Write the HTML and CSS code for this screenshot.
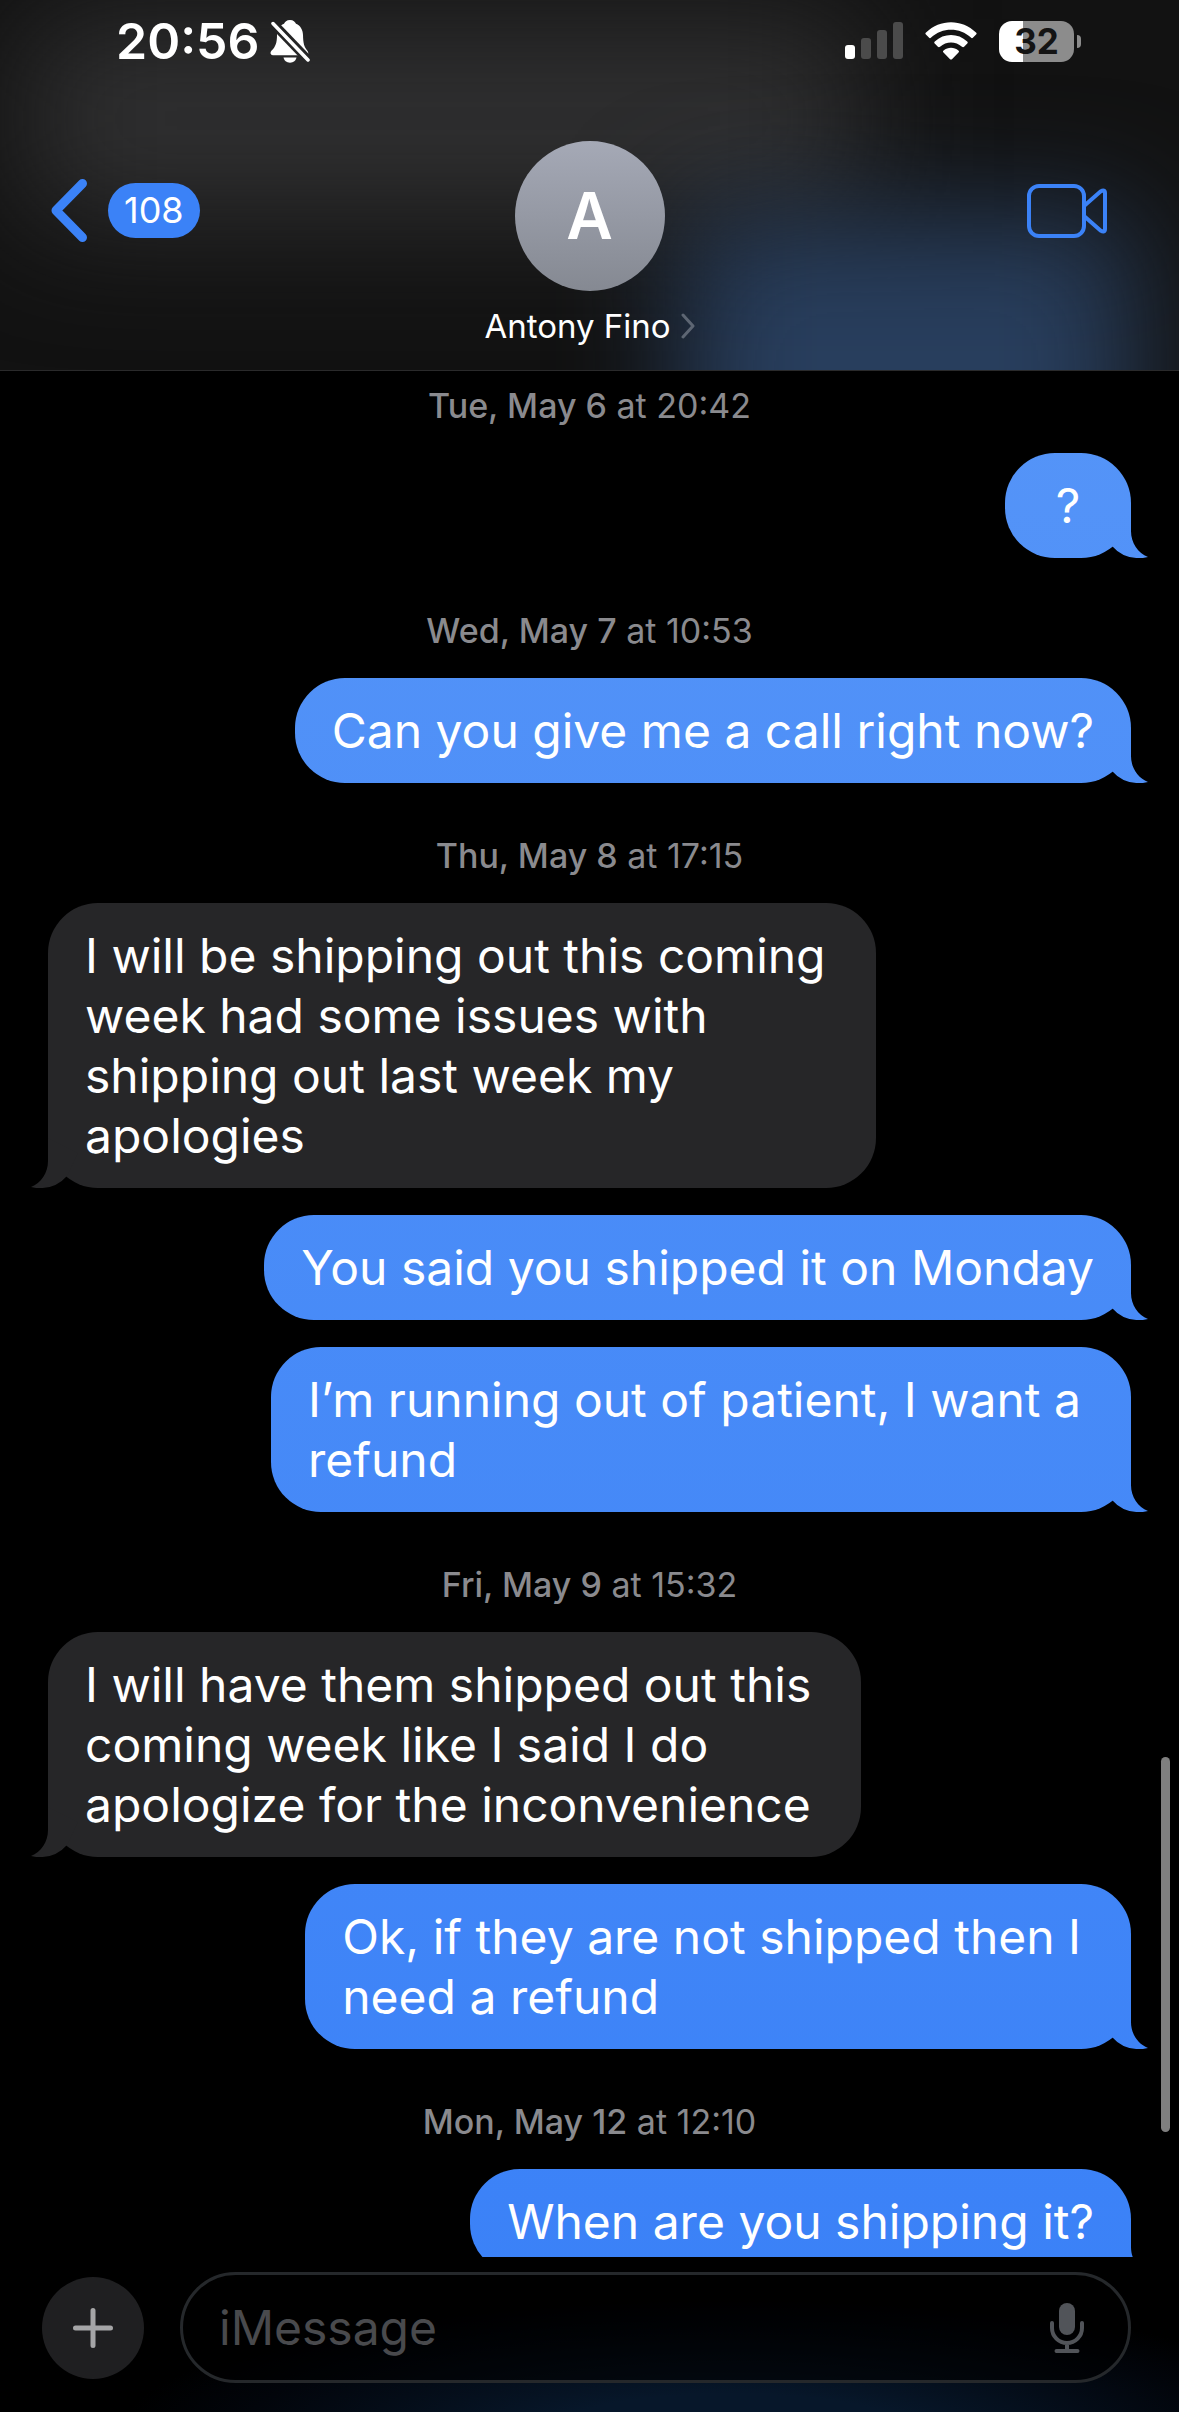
FILE: index.html
```html
<!DOCTYPE html>
<html lang="en">
<head>
  <meta charset="UTF-8" />
  <meta name="viewport" content="width=device-width, initial-scale=1.0"/>
  <title>Messages - Antony Fino</title>

  <link rel="stylesheet" href="styles.css">
</head>

<body>
  <header class="header">
    <div class="status-bar">
      <span class="time">20:56</span>
      <svg class="bell" width="40" height="44" viewBox="0 0 40 44" aria-hidden="true">
        <mask id="slashGap">
          <rect width="40" height="44" fill="#fff"/>
          <path d="M-3 -2L44 47" stroke="#000" stroke-width="9"/>
        </mask>
        <g fill="#fff" mask="url(#slashGap)">
          <path d="M20 1c3.400 0 5.200 1.900 6 3.800 4.600 2 6.800 6 7 11.200.2 8 .9 11.500 4.200 15.600 1.600 2 1.700 4.600-1.200 4.600H3c-2.700 0-3.300-2.600-1.400-4.600C5.500 27.800 7 24 7 16c.2-5.200 2.400-9.200 7-11.200C14.800 2.900 16.600 1 20 1z"/>
          <path d="M13.500 38.500h13c-.6 3-3 5.200-6.500 5.200s-5.900-2.200-6.500-5.200z"/>
        </g>
        <path d="M3 4.500L38 41" stroke="#fff" stroke-width="3.500" stroke-linecap="round"/>
      </svg>

      <div class="status-icons">
        <svg width="58" height="38" viewBox="0 0 58 38" aria-hidden="true">
          <rect x="0" y="23" width="10" height="14" rx="3" fill="#fff"/>
          <rect x="16" y="16" width="10" height="21" rx="3" fill="#4b4b4b"/>
          <rect x="32" y="8" width="10" height="29" rx="3" fill="#4b4b4b"/>
          <rect x="48" y="0" width="10" height="37" rx="3" fill="#4b4b4b"/>
        </svg>
        <svg width="52" height="38" viewBox="0 0 52 38" fill="#fff" aria-hidden="true">
          <path d="M1 10.500C15-3.300 37-3.300 51 10.500c.8.800.8 1.400.1 2.100l-3 3c-.7.700-1.500.7-2.200 0-11-10.600-28.800-10.600-39.800 0-.7.700-1.500.7-2.200 0l-3-3c-.7-.7-.7-1.300.1-2.100z"/>
          <path d="M9.800 19.400c9.200-8.600 23.200-8.600 32.400 0 .7.700.7 1.400.1 2.100l-3.200 3.200c-.7.700-1.400.6-2.100 0-6.300-5.700-15.700-5.700-22 0-.7.600-1.400.7-2.100 0l-3.200-3.200c-.6-.7-.6-1.400.1-2.100z"/>
          <path d="M18.600 28.400c4.200-3.500 10.600-3.500 14.800 0 .8.700.8 1.400.1 2.100l-6.300 6.400c-.8.800-1.600.8-2.400 0l-6.300-6.400c-.7-.7-.7-1.400.1-2.100z"/>
        </svg>
        <div class="battery"><span class="battery-level">32</span></div>
      </div>
    </div>

    <nav class="nav">
      <a class="back" href="#" aria-label="Back">
        <svg width="38" height="65" viewBox="0 0 38 65" fill="none" aria-hidden="true">
          <path d="M32.500 5.500L6 32.500l26.500 27" stroke="#3b82f7" stroke-width="9" stroke-linecap="round" stroke-linejoin="round"/>
        </svg>
        <span class="unread">108</span>
      </a>

      <button class="contact" type="button">
        <span class="avatar">A</span>
        <span class="contact-name">
          Antony Fino
          <svg width="14" height="26" viewBox="0 0 14 26" fill="none" aria-hidden="true">
            <path d="M2 2l10 11L2 24" stroke="#5d6673" stroke-width="3" stroke-linecap="round" stroke-linejoin="round"/>
          </svg>
        </span>
      </button>

      <button class="video" type="button" aria-label="Video call">
        <svg width="80" height="54" viewBox="0 0 80 54" fill="none" stroke="#3b82f7" stroke-width="4" stroke-linejoin="round" aria-hidden="true">
          <rect x="2" y="2" width="55" height="50" rx="10"/>
          <path d="M57 22L73.500 7.500Q78 5 78 9v36q0 4-4.500 1.500L57 32"/>
        </svg>
      </button>
    </nav>
  </header>

  <main class="messages">
    <p class="timestamp"><strong>Tue, May 6</strong> at 20:42</p>
    <div class="bubble sent">?</div>

    <p class="timestamp"><strong>Wed, May 7</strong> at 10:53</p>
    <div class="bubble sent">Can you give me a call right now?</div>

    <p class="timestamp"><strong>Thu, May 8</strong> at 17:15</p>
    <div class="bubble received wrapped">I will be shipping out this coming<br>week had some issues with<br>shipping out last week my<br>apologies</div>
    <div class="bubble sent">You said you shipped it on Monday</div>
    <div class="bubble sent wrapped">I’m running out of patient, I want a<br>refund</div>

    <p class="timestamp"><strong>Fri, May 9</strong> at 15:32</p>
    <div class="bubble received wrapped">I will have them shipped out this<br>coming week like I said I do<br>apologize for the inconvenience</div>
    <div class="bubble sent wrapped">Ok, if they are not shipped then I<br>need a refund</div>

    <p class="timestamp"><strong>Mon, May 12</strong> at 12:10</p>
    <div class="bubble sent">When are you shipping it?</div>

    <div class="scroll-thumb"></div>
  </main>

  <footer class="composer">
    <button class="plus" type="button" aria-label="Add attachment">
      <svg width="40" height="40" viewBox="0 0 40 40" aria-hidden="true">
        <path d="M20 2.500v35M2.500 20h35" stroke="#a5a5a7" stroke-width="5" stroke-linecap="round"/>
      </svg>
    </button>
    <div class="field">
      <input type="text" placeholder="iMessage" aria-label="iMessage" />
      <button class="mic" type="button" aria-label="Dictate">
        <svg width="36" height="52" viewBox="0 0 36 52" fill="none" aria-hidden="true">
          <rect x="10" y="1" width="16" height="32" rx="8" fill="#515459"/>
          <path d="M3 21v5a15 15 0 0 0 30 0v-5M18 41v8M7.500 49h21" stroke="#515459" stroke-width="4" stroke-linecap="round"/>
        </svg>
      </button>
    </div>
  </footer>
</body>
</html>
```

FILE: styles.css
```css
* {
  box-sizing: border-box;
}

body {
  font-family: Inter, "Liberation Sans", sans-serif;
  background: #000;
  color: #fff;
  margin: 0;
  height: 100vh;
  display: flex;
  flex-direction: column;
  overflow: hidden;
}

button {
  font: inherit;
  color: inherit;
  background: none;
  border: none;
  padding: 0;
  cursor: pointer;
}

svg {
  display: block;
  flex: none;
}

/* header */
.header {
  position: relative;
  isolation: isolate;
  flex: none;
  background: #121212;
  border-bottom: 1px solid #2a2a2b;
  padding-bottom: 24px;
  overflow: hidden;
}

.header::before,
.header::after {
  content: "";
  position: absolute;
  z-index: -1;
}

.header::before {
  left: 2%;
  right: 27%;
  top: 5%;
  height: 54%;
  background: #303031;
  filter: blur(64px);
}

.header::after {
  left: 58%;
  right: 4%;
  top: 59%;
  bottom: -60%;
  background: #283e5d;
  filter: blur(60px);
}

.status-bar {
  display: flex;
  align-items: center;
  height: 82px;
  padding: 0 105px 0 116px;
}

.time {
  font-size: 50px;
  font-weight: 600;
}

.bell {
  margin-left: 10px;
}

.status-icons {
  display: flex;
  align-items: center;
  gap: 22px;
  margin-left: auto;
}

.battery {
  position: relative;
  width: 75px;
  height: 41px;
  border-radius: 13px;
  background: linear-gradient(to right, #fff 32%, #8c8c8c 32%);
  color: #141414;
  font-size: 35px;
  font-weight: 700;
  line-height: 41px;
  text-align: center;
}

.battery::after {
  content: "";
  position: absolute;
  left: 78px;
  top: 14px;
  width: 4px;
  height: 13px;
  border-radius: 0 4px 4px 0;
  background: #8c8c8c;
}

.nav {
  display: grid;
  grid-template-columns: 1fr auto 1fr;
  align-items: start;
  padding: 59px 50px 0;
}

.back,
.video {
  display: flex;
  align-items: center;
  height: 139px;
}

.back {
  gap: 20px;
  text-decoration: none;
}

.video {
  justify-self: end;
  margin-right: 22px;
}

.unread {
  padding: 0 16px;
  border-radius: 28px;
  background: #3b82f7;
  color: #fff;
  font-size: 36px;
  line-height: 55px;
}

.contact {
  display: flex;
  flex-direction: column;
  align-items: center;
  gap: 15px;
}

.avatar {
  width: 150px;
  border-radius: 50%;
  background: linear-gradient(#a5a9b6, #858992);
  font-size: 64px;
  font-weight: 600;
  line-height: 150px;
}

.contact-name {
  display: flex;
  align-items: center;
  gap: 10px;
  font-size: 33px;
  line-height: 40px;
}

/* conversation */
.messages {
  position: relative;
  flex: 1;
  min-height: 0;
  overflow: hidden;
  display: flex;
  flex-direction: column;
  padding: 0 48px;
}

.timestamp {
  margin: 53px 0 27px;
  color: #8a8a8e;
  font-size: 34px;
  line-height: 40px;
  text-align: center;
}

.timestamp:first-child {
  margin-top: 15px;
}

.timestamp strong {
  font-weight: 500;
}

.bubble {
  position: relative;
  flex: none;
  min-width: 126px;
  max-width: 84%;
  padding: 23px 37px 22px;
  border-radius: 50px;
  font-size: 48px;
  line-height: 60px;
  text-align: center;
}

.bubble + .bubble {
  margin-top: 27px;
}

.wrapped {
  padding-right: 50px;
  text-align: left;
}

.bubble::after {
  content: "";
  position: absolute;
  bottom: 0;
  width: 47px;
  height: 50px;
  background: inherit;
  clip-path: path("M30 0V23C30 35 37 45 47 49Q25 54 11 38L0 15Z");
}

.sent,
.sent::after {
  background: linear-gradient(#5a98f8, #3980f7) fixed;
}

.sent {
  align-self: flex-end;
}

.sent::after {
  right: -17px;
}

.received {
  align-self: flex-start;
  background: #262628;
}

.received::after {
  left: -17px;
  transform: scaleX(-1);
}

.scroll-thumb {
  position: absolute;
  right: 9px;
  top: 1386px;
  width: 9px;
  height: 375px;
  border-radius: 5px;
  background: #7f7f7f;
}

/* composer */
.composer {
  flex: none;
  display: flex;
  align-items: center;
  gap: 36px;
  padding: 15px 48px 29px 42px;
  background: radial-gradient(ellipse 52% 90% at 62% 115%, #07172a 30%, #02050b 80%, #000);
}

.plus {
  display: flex;
  align-items: center;
  justify-content: center;
  width: 102px;
  height: 102px;
  border-radius: 50%;
  background: #1f1f21;
}

.field {
  flex: 1;
  display: flex;
  align-items: center;
  height: 111px;
  padding: 0 43px 0 36px;
  border: 3px solid #25282b;
  border-radius: 56px;
  background: rgba(0, 0, 0, 0.6);
}

.field input {
  flex: 1;
  min-width: 0;
  padding: 0;
  border: none;
  outline: none;
  background: none;
  color: #fff;
  font: inherit;
  font-size: 48px;
}

.field input::placeholder {
  color: #494a4d;
}
```
